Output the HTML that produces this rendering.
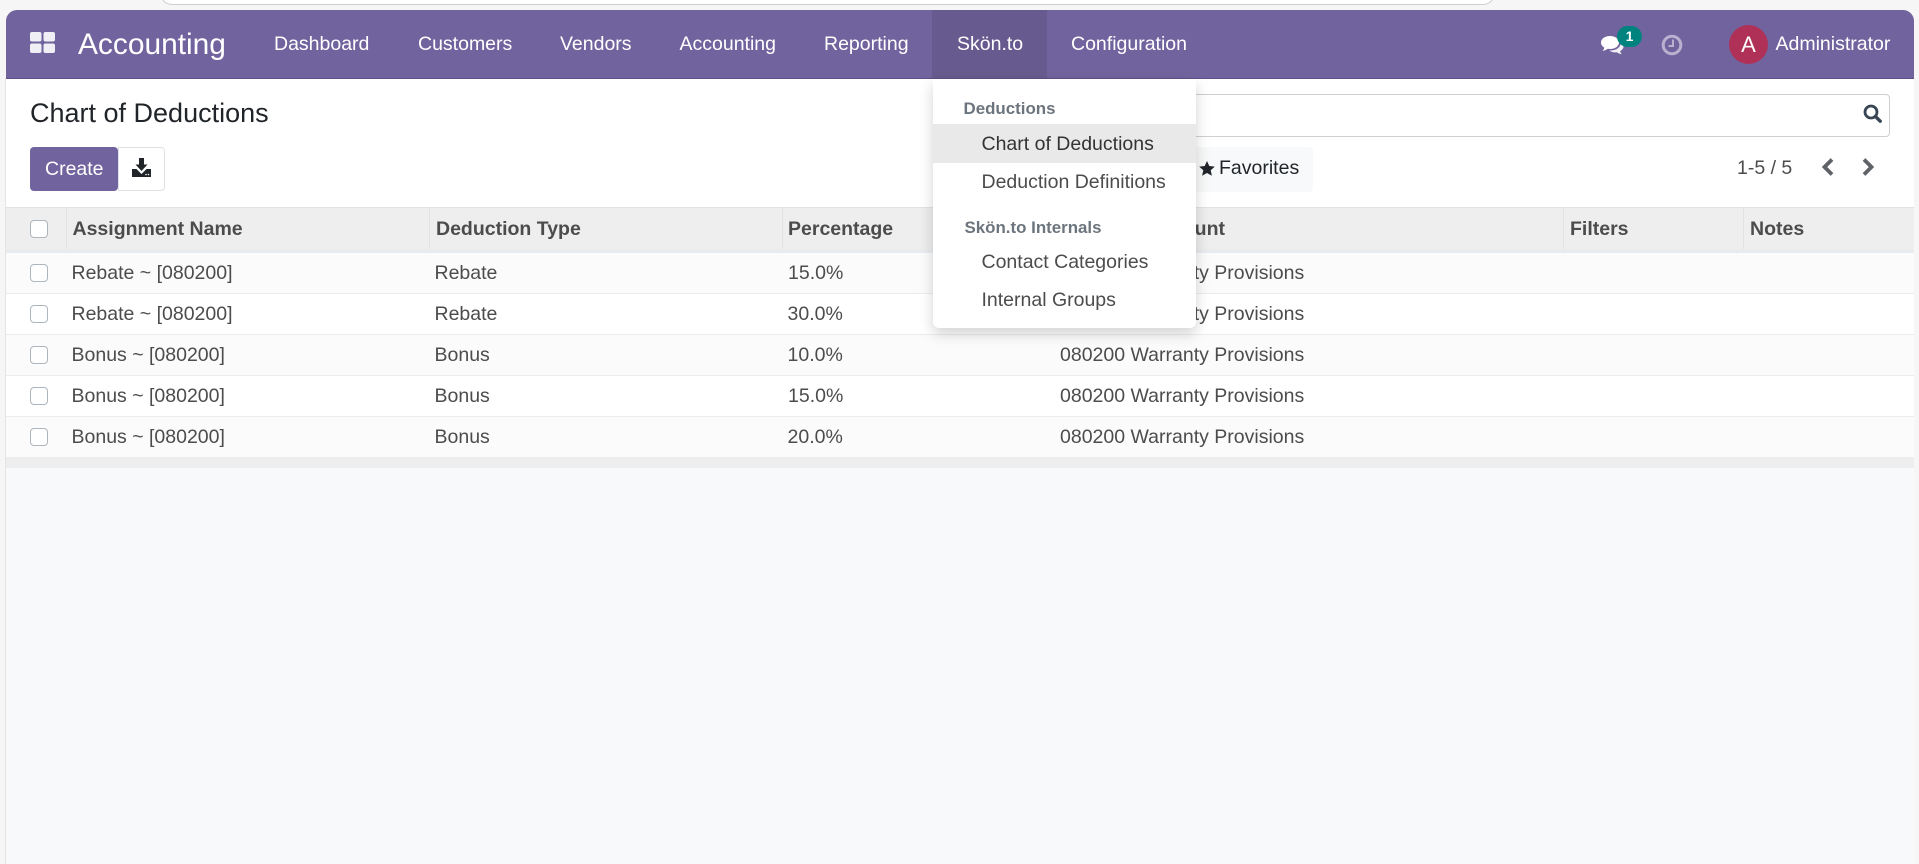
<!DOCTYPE html>
<html lang="en">
<head>
<meta charset="utf-8">
<title>Chart of Deductions</title>
<style>
html,body{margin:0;padding:0;width:1919px;height:864px;overflow:hidden;background:#f6f6f6;}
body{position:relative;font-family:"Liberation Sans",Arial,sans-serif;font-size:19.5px;color:#4c4c4c;}
.a{position:absolute;}
.t{position:absolute;white-space:nowrap;line-height:30px;height:30px;}
.n{color:#fff;top:29px;}
.b{font-weight:bold;top:214px;color:#4c4c4c;}
.s{position:absolute;top:207px;width:1px;height:42px;background:#e2e2e2;}
.row{position:absolute;left:6px;width:1908px;height:40px;border-bottom:1px solid #ececec;background:#fff;}
.odd{background:#fbfbfb;}
.cb{position:absolute;left:30px;width:16px;height:16px;border:1px solid #adb5bd;border-radius:4px;background:#fff;}
.m{color:#4c4c4c;}
.h{font-weight:bold;font-size:16.9px;color:#6c757d;}
</style>
</head>
<body>
<!-- top sliver -->
<div class="a" style="left:0;top:0;width:1919px;height:10px;background:#f6f6f6;"></div>
<div class="a" style="left:160px;top:-10px;width:1333px;height:13px;background:#fff;border:1px solid #cfcfcf;border-radius:0 0 12px 12px;"></div>

<!-- main surface -->
<div class="a" style="left:5px;top:78px;width:1px;height:786px;background:#e4e4e4;"></div>
<div class="a" style="left:6px;top:79px;width:1908px;height:785px;background:#f8f9fa;"></div>
<div class="a" style="left:6px;top:79px;width:1908px;height:128px;background:#fff;"></div>

<!-- navbar -->
<div class="a" style="left:6px;top:10px;width:1908px;height:68px;background:#71639e;border-bottom:1px solid #5d5185;border-radius:11px 11px 0 0;"></div>
<div class="a" style="left:932px;top:10px;width:115px;height:68px;background:#675a8e;"></div>
<svg class="a" style="left:30px;top:32px;" width="25" height="21" viewBox="0 0 25 21"><g fill="#f0eff5"><rect x="0" y="0" width="11.5" height="9.5" rx="2"/><rect x="13.5" y="0" width="11.5" height="9.5" rx="2"/><rect x="0" y="11.5" width="11.5" height="9.5" rx="2"/><rect x="13.5" y="11.5" width="11.5" height="9.5" rx="2"/></g></svg>
<div class="t" style="left:78px;top:30px;color:#fff;font-size:29.9px;">Accounting</div>
<div class="t n" style="left:274px;">Dashboard</div>
<div class="t n" style="left:418px;">Customers</div>
<div class="t n" style="left:560px;">Vendors</div>
<div class="t n" style="left:679.5px;">Accounting</div>
<div class="t n" style="left:824px;">Reporting</div>
<div class="t n" style="left:957px;">Skön.to</div>
<div class="t n" style="left:1071px;">Configuration</div>

<!-- chat -->
<svg class="a" style="left:1600px;top:35px;" width="26" height="21" viewBox="0 0 26 21"><path d="M10 1C4.800 1 1 3.900 1 7.500c0 2.100 1.300 3.900 3.300 5.100C4 14 3.200 15.100 2.400 15.800c2 0 4.100-.9 5.400-2 .7.100 1.400.2 2.200.2 5.200 0 9-2.900 9-6.500S15.200 1 10 1z" fill="#fff"/><path d="M20.500 6.500c.2.500.2 1 .2 1.500 0 4.300-4.500 7.500-10 7.500-.5 0-1 0-1.500-.1 1.500 1.300 3.500 2 5.800 2 .7 0 1.300-.1 1.900-.2 1.200 1 3 1.800 5 1.900-.7-.7-1.500-1.700-1.800-2.900 2-1 3.400-2.800 3.400-4.700 0-2-1.300-3.800-3-5z" fill="#f2f0f7"/></svg>
<div class="a" style="left:1617px;top:26px;width:25px;height:21px;border-radius:11px;background:#00827f;"></div>
<div class="t" style="left:1617px;top:21px;width:25px;text-align:center;color:#fff;font-weight:bold;font-size:14px;">1</div>
<!-- clock -->
<svg class="a" style="left:1661px;top:34px;" width="22" height="22" viewBox="0 0 22 22"><circle cx="11" cy="11" r="8.800" fill="none" stroke="#b8b1cf" stroke-width="3"/><path d="M12 5.500V12H7.500" fill="none" stroke="#b8b1cf" stroke-width="2"/></svg>
<!-- avatar -->
<div class="a" style="left:1729px;top:25px;width:39px;height:39px;border-radius:50%;background:#b03157;"></div>
<div class="t" style="left:1729px;top:30px;width:39px;text-align:center;color:#fff;font-size:22px;">A</div>
<div class="t n" style="left:1775.500px;">Administrator</div>

<!-- control panel -->
<div class="t" style="left:30px;top:98px;font-size:27px;color:#212529;">Chart of Deductions</div>
<div class="a" style="left:30px;top:147px;width:88px;height:44px;background:#71639e;border-radius:4px;"></div>
<div class="t" style="left:45px;top:154px;color:#fff;">Create</div>
<div class="a" style="left:118px;top:147px;width:45px;height:42px;background:#fff;border:1px solid #dee2e6;border-radius:0 4px 4px 0;"></div>
<svg class="a" style="left:132px;top:158px;" width="19" height="19" viewBox="0 0 19 19"><path d="M7 0h5v6.500h3.500l-6 6.500-6-6.500H7z" fill="#212529"/><path d="M0 11h4.500l5 5 5-5H19v8H0z" fill="#212529"/><circle cx="14" cy="16.500" r=".8" fill="#fff"/><circle cx="16.500" cy="16.500" r=".8" fill="#fff"/></svg>

<!-- search -->
<div class="a" style="left:1100px;top:94px;width:788px;height:41px;background:#fff;border:1px solid #cfcfcf;border-radius:4px;"></div>
<svg class="a" style="left:1863px;top:104px;" width="19" height="19" viewBox="0 0 19 19"><circle cx="8" cy="8" r="6" fill="none" stroke="#374554" stroke-width="2.800"/><path d="M12.500 12.500L17.200 17.200" stroke="#374554" stroke-width="3.400" stroke-linecap="round"/></svg>

<!-- favourites -->
<div class="a" style="left:1100px;top:147px;width:212.500px;height:45px;background:#f8f9fa;border-radius:4px;"></div>
<svg class="a" style="left:1199px;top:161px;" width="16" height="15" viewBox="0 0 16 15"><path d="M8 0l2.300 5 5.500.6-4.100 3.700 1.200 5.400L8 12l-4.900 2.700 1.200-5.400L.2 5.600 5.700 5z" fill="#212529"/></svg>
<div class="t" style="left:1219px;top:153px;color:#212529;">Favorites</div>

<!-- pager -->
<div class="t" style="left:1737px;top:153px;color:#4c4c4c;">1-5 / 5</div>
<svg class="a" style="left:1821px;top:158px;" width="14" height="18" viewBox="0 0 14 18"><path d="M11 1.500L3.500 9l7.500 7.500" fill="none" stroke="#5f6368" stroke-width="3.800"/></svg>
<svg class="a" style="left:1861px;top:158px;" width="14" height="18" viewBox="0 0 14 18"><path d="M3 1.500L10.500 9 3 16.500" fill="none" stroke="#5f6368" stroke-width="3.800"/></svg>

<!-- table header -->
<div class="a" style="left:6px;top:207px;width:1908px;height:42px;background:#eeeeee;border-top:1px solid #e2e2e2;box-sizing:border-box;"></div>
<div class="a" style="left:6px;top:249px;width:1908px;height:4px;background:#e9ecef;"></div>
<div class="cb" style="top:220px;"></div>
<div class="s" style="left:66px;"></div>
<div class="s" style="left:429px;"></div>
<div class="s" style="left:782px;"></div>
<div class="s" style="left:1563px;"></div>
<div class="s" style="left:1743px;"></div>
<div class="t b" style="left:72.500px;">Assignment Name</div>
<div class="t b" style="left:436px;">Deduction Type</div>
<div class="t b" style="left:788px;">Percentage</div>
<div class="t b" style="left:1147px;">Account</div>
<div class="t b" style="left:1570px;">Filters</div>
<div class="t b" style="left:1750px;">Notes</div>

<!-- rows -->
<div class="row odd" style="top:253px;"></div>
<div class="row" style="top:294px;"></div>
<div class="row odd" style="top:335px;"></div>
<div class="row" style="top:376px;"></div>
<div class="row odd" style="top:417px;"></div>
<div class="a" style="left:6px;top:458px;width:1908px;height:10px;background:#eeeeee;"></div>

<div class="cb" style="top:264px;"></div>
<div class="t m" style="left:71.500px;top:258px;">Rebate ~ [080200]</div>
<div class="t m" style="left:434.500px;top:258px;">Rebate</div>
<div class="t m" style="left:788px;top:258px;">15.0%</div>
<div class="t m" style="left:1060px;top:258px;">080200 Warranty Provisions</div>

<div class="cb" style="top:305px;"></div>
<div class="t m" style="left:71.500px;top:299px;">Rebate ~ [080200]</div>
<div class="t m" style="left:434.500px;top:299px;">Rebate</div>
<div class="t m" style="left:787.500px;top:299px;">30.0%</div>
<div class="t m" style="left:1060px;top:299px;">080200 Warranty Provisions</div>

<div class="cb" style="top:346px;"></div>
<div class="t m" style="left:71.500px;top:340px;">Bonus ~ [080200]</div>
<div class="t m" style="left:434.500px;top:340px;">Bonus</div>
<div class="t m" style="left:787.500px;top:340px;">10.0%</div>
<div class="t m" style="left:1060px;top:340px;">080200 Warranty Provisions</div>

<div class="cb" style="top:387px;"></div>
<div class="t m" style="left:71.500px;top:381px;">Bonus ~ [080200]</div>
<div class="t m" style="left:434.500px;top:381px;">Bonus</div>
<div class="t m" style="left:788px;top:381px;">15.0%</div>
<div class="t m" style="left:1060px;top:381px;">080200 Warranty Provisions</div>

<div class="cb" style="top:428px;"></div>
<div class="t m" style="left:71.500px;top:422px;">Bonus ~ [080200]</div>
<div class="t m" style="left:434.500px;top:422px;">Bonus</div>
<div class="t m" style="left:787.500px;top:422px;">20.0%</div>
<div class="t m" style="left:1060px;top:422px;">080200 Warranty Provisions</div>

<!-- dropdown -->
<div class="a" style="left:933px;top:79px;width:263px;height:249px;background:#fff;border-radius:0 0 6px 6px;box-shadow:0 6px 14px rgba(0,0,0,.175);"></div>
<div class="a" style="left:933px;top:124px;width:263px;height:39px;background:#e9e9e9;"></div>
<div class="t h" style="left:963.500px;top:94px;">Deductions</div>
<div class="t" style="left:981.500px;top:128.500px;color:#333;">Chart of Deductions</div>
<div class="t m" style="left:981.500px;top:166.500px;">Deduction Definitions</div>
<div class="t h" style="left:964.500px;top:212.500px;">Skön.to Internals</div>
<div class="t m" style="left:981.500px;top:246.500px;">Contact Categories</div>
<div class="t m" style="left:981.500px;top:284.500px;">Internal Groups</div>
</body>
</html>
